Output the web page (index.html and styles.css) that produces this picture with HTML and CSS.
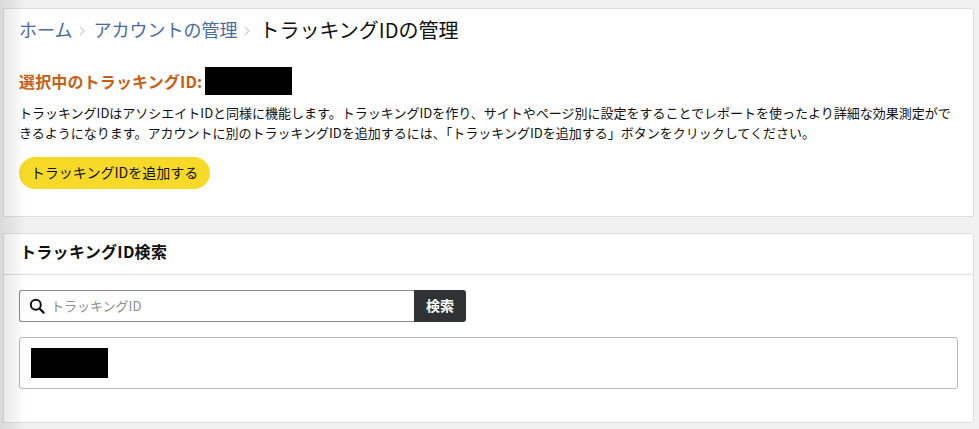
FILE: index.html
```html
<!DOCTYPE html>
<html lang="ja">
<head>
  <meta charset="UTF-8">
  <title>トラッキングIDの管理</title>
  <link rel="stylesheet" href="styles.css">
</head>
<body>
  <div class="side-shade"></div>
  <main class="page">
    <section class="card top-card">
      <nav class="crumbs">
        <a href="#">ホーム</a>
        <svg class="crumb-sep" viewBox="0 0 6 10" width="6" height="10"><path d="M1 1L5 5L1 9" fill="none" stroke="#cfcfcf" stroke-width="1.2"/></svg>
        <a href="#">アカウントの管理</a>
        <svg class="crumb-sep" viewBox="0 0 6 10" width="6" height="10"><path d="M1 1L5 5L1 9" fill="none" stroke="#cfcfcf" stroke-width="1.2"/></svg>
        <span class="crumb-current">トラッキングIDの管理</span>
      </nav>
      <div class="selected">
        <span class="selected-label">選択中のトラッキングID:</span>
        <span class="redact redact-id"></span>
      </div>
      <p class="intro">トラッキングIDはアソシエイトIDと同様に機能します。トラッキングIDを作り、サイトやページ別に設定をすることでレポートを使ったより詳細な効果測定ができるようになります。アカウントに別のトラッキングIDを追加するには、「トラッキングIDを追加する」ボタンをクリックしてください。</p>
      <button class="add-btn">トラッキングIDを追加する</button>
    </section>
    <section class="card search-card">
      <h2 class="card-title">トラッキングID検索</h2>
      <div class="card-body">
        <div class="search">
          <label class="search-field">
            <svg class="search-icon" viewBox="0 0 16 16" width="16" height="16">
              <circle cx="6.8" cy="6.8" r="5" fill="none" stroke="#0f1111" stroke-width="2"/>
              <path d="M10.5 10.5L14.6 14.6" stroke="#0f1111" stroke-width="2.2" stroke-linecap="round"/>
            </svg>
            <input type="text" placeholder="トラッキングID">
          </label>
          <button class="search-btn">検索</button>
        </div>
        <div class="result">
          <span class="redact redact-result"></span>
        </div>
      </div>
    </section>
  </main>
</body>
</html>
```

FILE: styles.css
```css
* {
  box-sizing: border-box;
}
body {
  margin: 0;
  background-color: #f1f1f1;
  color: #0f1111;
  font-family: "Noto Sans CJK JP", "Noto Sans", sans-serif;
  height: 429px;
  overflow: hidden;
}
.side-shade {
  position: absolute;
  top: 0;
  left: 0;
  bottom: 0;
  width: 26px;
  background: linear-gradient(to right, rgba(0, 0, 0, 0.1), rgba(0, 0, 0, 0));
  pointer-events: none;
}
.page {
  display: flex;
  flex-direction: column;
  gap: 16px;
  padding: 8px 5px 0 3px;
}
.card {
  background-color: white;
  border: 1px solid #dddddd;
  border-radius: 2px;
}
.top-card {
  height: 209px;
  padding: 5px 15px 0;
}
.crumbs {
  display: flex;
  align-items: center;
  height: 30px;
  font-size: 18px;
  color: #4a6b9d;
}
.crumbs a {
  color: #4a6b9d;
  text-decoration: none;
}
.crumb-sep {
  margin: 4px 8px 0 7px;
}
.crumb-current {
  margin-left: 1px;
  font-size: 20px;
  color: #0f1111;
}
.selected {
  display: flex;
  align-items: center;
  gap: 3px;
  margin-top: 23px;
  height: 28px;
}
.selected-label {
  font-size: 16px;
  font-weight: bold;
  letter-spacing: 0.15px;
  color: #c45f14;
}
.redact {
  display: block;
  background-color: black;
}
.redact-id {
  width: 87px;
  height: 28px;
}
.intro {
  margin: 8px 0 0;
  font-size: 13px;
  line-height: 20px;
}
.add-btn {
  display: block;
  width: 191px;
  height: 32px;
  margin-top: 14px;
  padding: 0 0 2px;
  background-color: #f7d928;
  border: none;
  border-radius: 16px;
  color: #0f1111;
  font-family: inherit;
  font-size: 14px;
}
.search-card {
  height: 190px;
}
.card-title {
  margin: 0;
  height: 41px;
  padding: 0 16px;
  border-bottom: 1px solid #dddddd;
  font-size: 16px;
  letter-spacing: 0.3px;
  line-height: 34px;
}
.card-body {
  padding: 15px 15px 0;
}
.search {
  display: flex;
  width: 447px;
  height: 32px;
}
.search-field {
  flex: 1;
  display: flex;
  align-items: center;
  gap: 6px;
  padding-left: 9px;
  border: 1px solid #888c8c;
  border-right: none;
  border-radius: 3px 0 0 3px;
}
.search-icon {
  flex-shrink: 0;
}
.search-field input {
  flex: 1;
  min-width: 0;
  border: none;
  outline: none;
  padding: 0 0 2px;
  font-family: inherit;
  font-size: 13px;
}
.search-field input::placeholder {
  color: #8a8f8f;
}
.search-btn {
  width: 52px;
  padding: 0 0 2px;
  background-color: #303333;
  border: none;
  border-radius: 0 3px 3px 0;
  color: white;
  font-family: inherit;
  font-size: 14px;
  font-weight: bold;
}
.result {
  width: 939px;
  height: 52px;
  margin-top: 15px;
  padding: 10px 11px;
  border: 1px solid #b9b9b9;
  border-radius: 3px;
}
.redact-result {
  width: 77px;
  height: 30px;
}
```
